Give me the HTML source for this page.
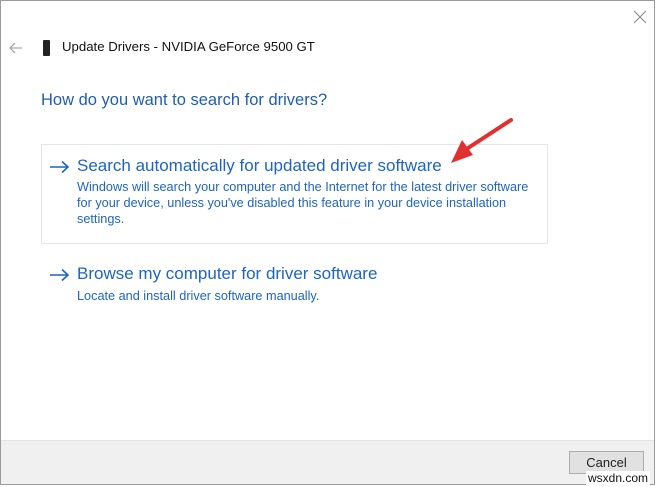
<!DOCTYPE html>
<html><head><meta charset="utf-8"><style>
*{margin:0;padding:0;box-sizing:border-box}
body{width:659px;height:487px;background:#fff;position:relative;overflow:hidden;font-family:"Segoe UI","Liberation Sans",sans-serif}
.win{position:absolute;left:0;top:0;width:655px;height:485px;border:1px solid #9a9a9a;background:#fff}
.t{position:absolute;white-space:nowrap}
.footer{position:absolute;left:1px;top:440px;width:653px;height:44px;background:#f0f0f0;border-top:1px solid #e3e3e3}
.btn{position:absolute;left:569px;top:451px;width:75px;height:23px;background:#e1e1e1;border:1px solid #adadad;font-size:13px;color:#222;text-align:center;line-height:21px}
.box{position:absolute;left:41px;top:144px;width:507px;height:100px;border:1px solid #e6e6e6}
.big{font-size:17px;color:#1d64c4}
.small{font-size:12.7px;color:#1d64c4;line-height:16px}
</style></head><body>
<div class="win"></div>
<svg class="t" style="left:633px;top:10px" width="14" height="14"><path d="M1 1L13 13M13 1L1 13" stroke="#888" stroke-width="1"/></svg>
<svg class="t" style="left:9px;top:42px" width="14" height="12"><path d="M1 6H13M6 1L1 6L6 11" stroke="#aaa" stroke-width="1.3" fill="none"/></svg>
<div class="t" style="left:43px;top:40px;width:7px;height:16px;background:#222;border-radius:1px"></div>
<div class="t" style="left:62px;top:39px;font-size:13.2px;color:#111">Update Drivers - NVIDIA GeForce 9500 GT</div>
<div class="t" style="left:41px;top:91px;font-size:16.5px;color:#1f5eb0">How do you want to search for drivers?</div>
<div class="box"></div>
<svg class="t" style="left:49px;top:160px" width="22" height="14"><path d="M1 7H19M13 1.5L19 7L13 12.5" stroke="#1d64c4" stroke-width="1.6" fill="none"/></svg>
<div class="t big" style="left:77px;top:156px">Search automatically for updated driver software</div>
<div class="t small" style="left:77px;top:179px">Windows will search your computer and the Internet for the latest driver software<br>for your device, unless you've disabled this feature in your device installation<br>settings.</div>
<svg class="t" style="left:49px;top:268px" width="22" height="14"><path d="M1 7H19M13 1.5L19 7L13 12.5" stroke="#1d64c4" stroke-width="1.6" fill="none"/></svg>
<div class="t big" style="left:77px;top:264px">Browse my computer for driver software</div>
<div class="t small" style="left:77px;top:288px">Locate and install driver software manually.</div>
<svg class="t" style="left:440px;top:110px" width="80" height="60"><path d="M71 10L25 40" stroke="#e03030" stroke-width="4" stroke-linecap="round"/><path d="M11 53L22 30L33 45Z" fill="#e03030"/></svg>
<div class="footer"></div>
<div class="btn">Cancel</div>
<div class="t" style="left:586px;top:471px;font-size:12px;color:#111;background:#fff;padding:0 2px">wsxdn.com</div>
</body></html>
